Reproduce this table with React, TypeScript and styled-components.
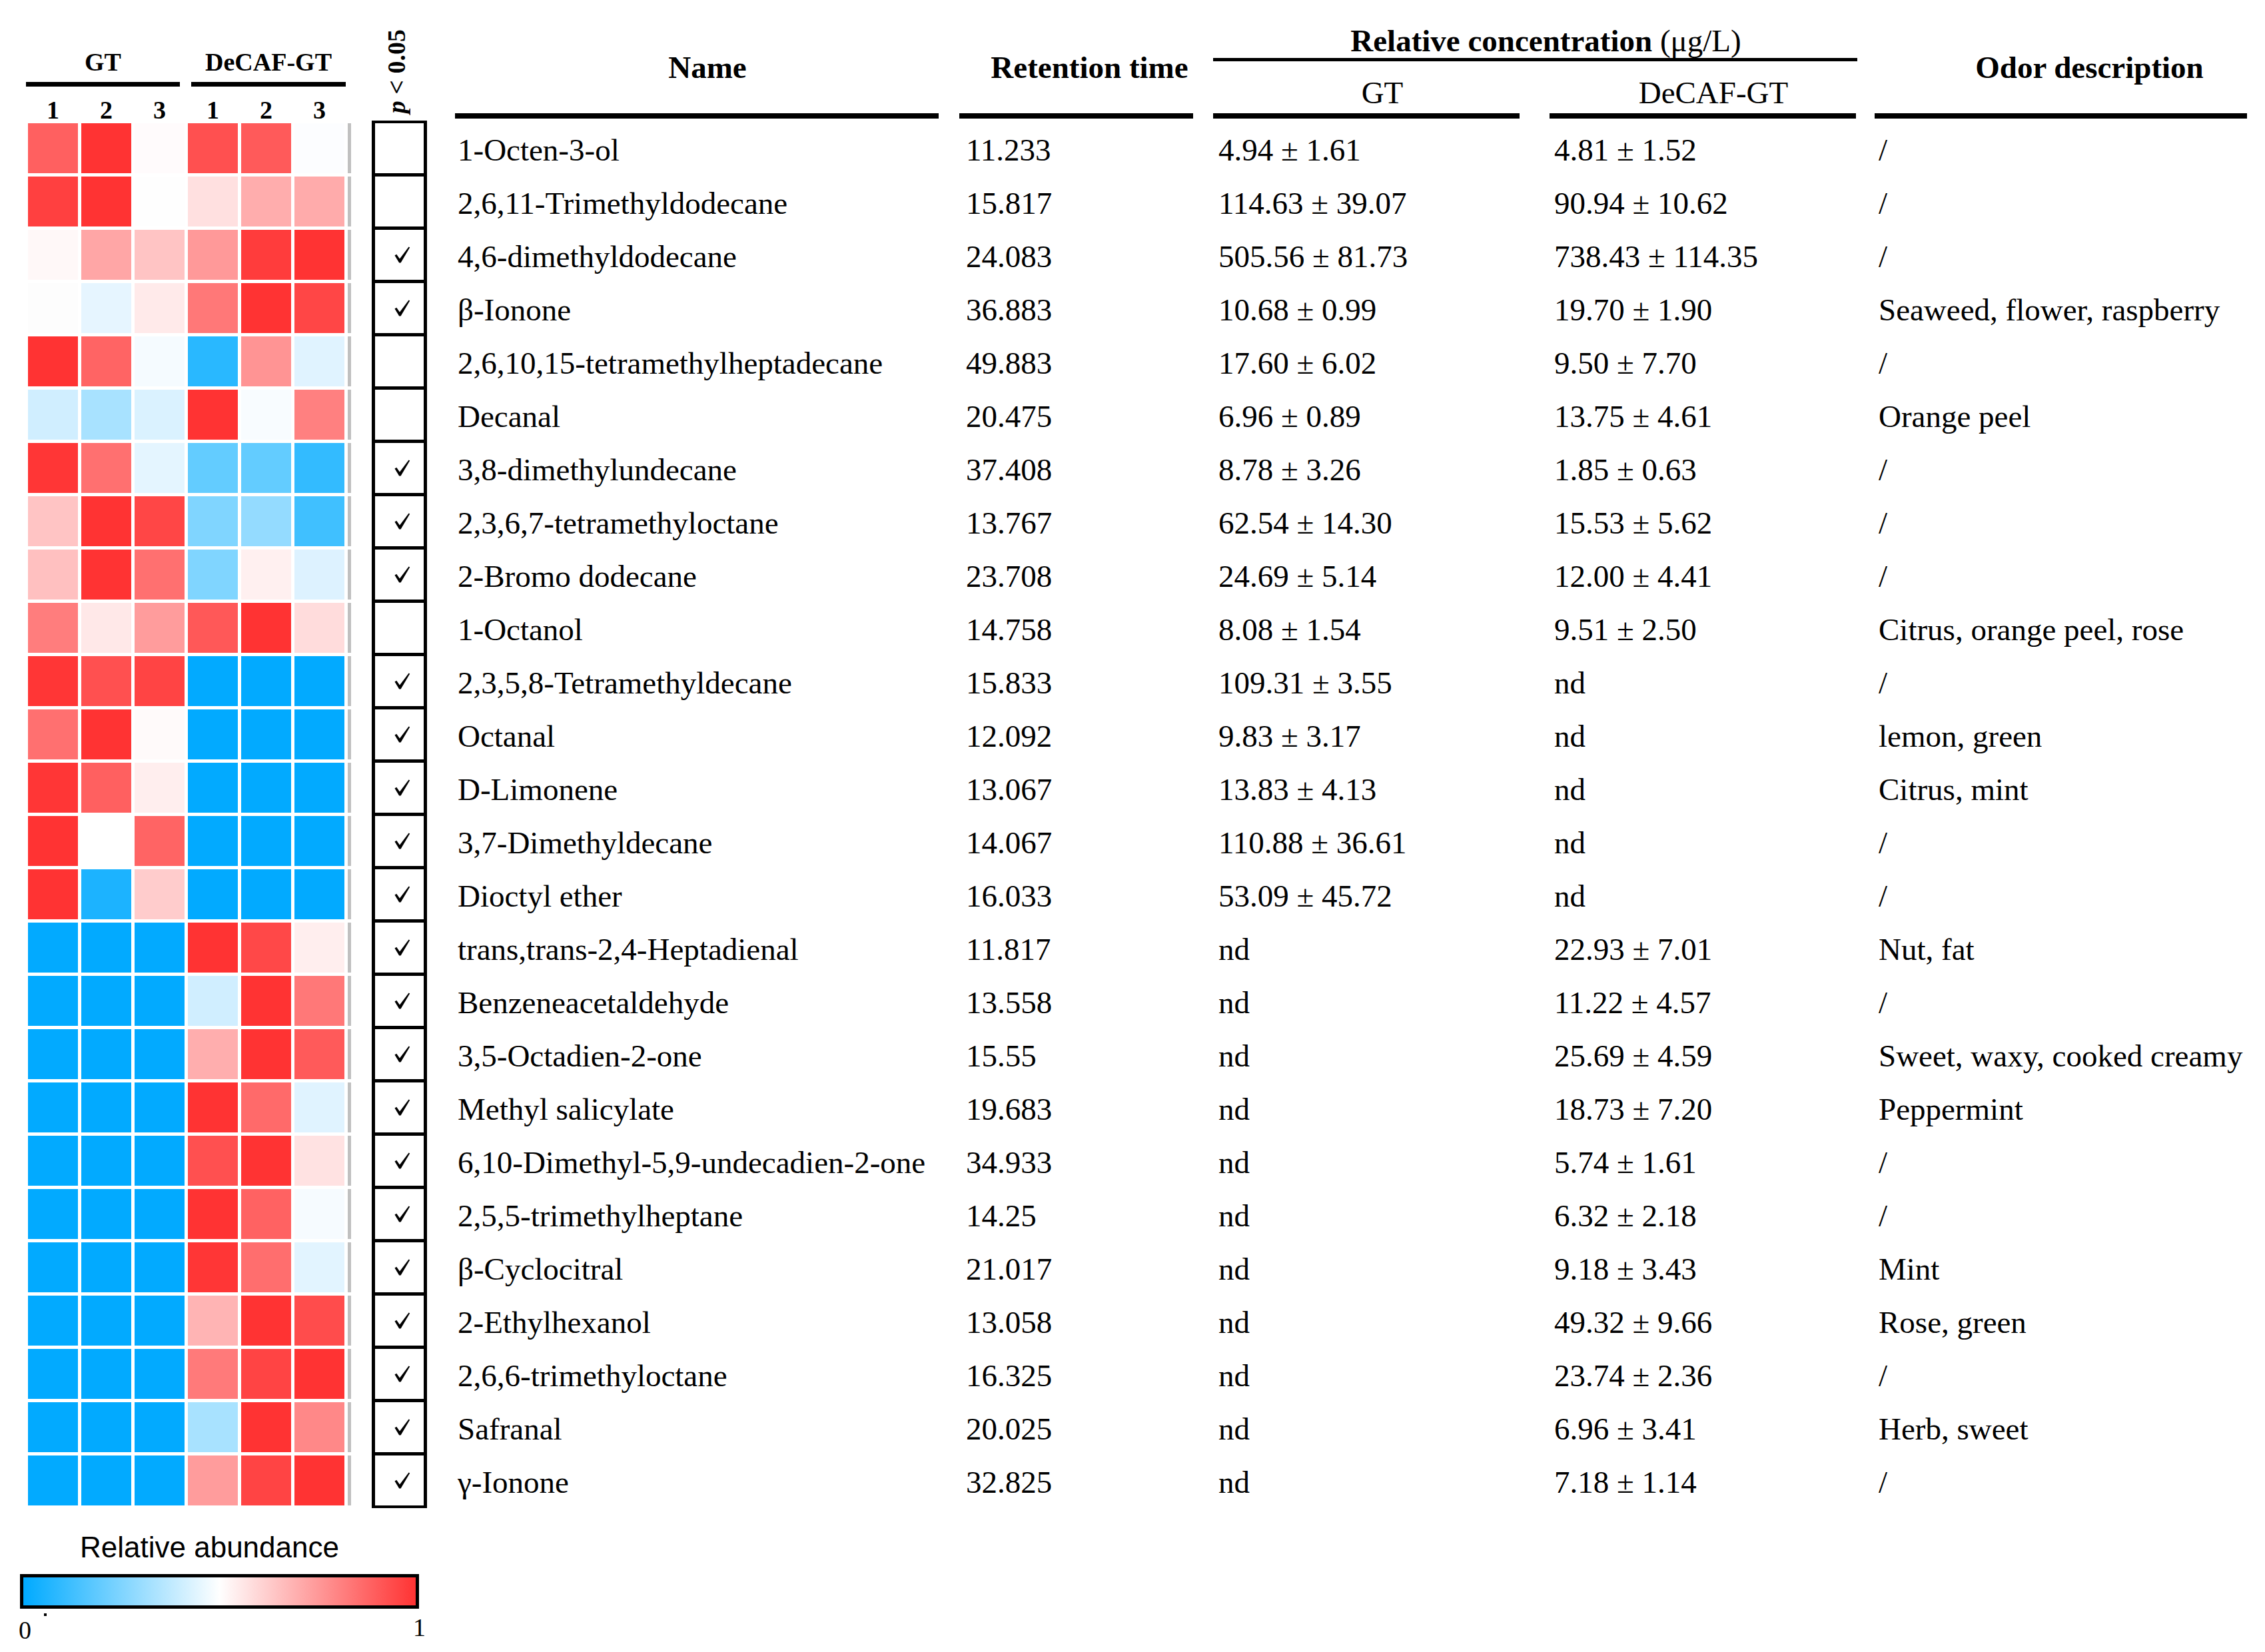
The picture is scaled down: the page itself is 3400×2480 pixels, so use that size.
import React from 'react';
import styled, { createGlobalStyle } from 'styled-components';

const GlobalStyle = createGlobalStyle`
  body {
    margin: 0;
    background: #fff;
    color: #000;
  }
`;

const SERIF = `'Liberation Serif', 'Times New Roman', serif`;
const B = '#02aaff';

type Row = {
  heat: string[];
  sig: boolean;
  name: string;
  rt: string;
  gt: string;
  decaf: string;
  odor: string;
};

const rows: Row[] = [
  { heat: ['#ff6060', '#ff3333', '#fffbfc', '#ff5050', '#ff5a5a', '#fcfdff'], sig: false, name: '1-Octen-3-ol', rt: '11.233', gt: '4.94 ± 1.61', decaf: '4.81 ± 1.52', odor: '/' },
  { heat: ['#ff4040', '#ff3333', '#fefefe', '#ffe0e0', '#ffadad', '#ffabab'], sig: false, name: '2,6,11-Trimethyldodecane', rt: '15.817', gt: '114.63 ± 39.07', decaf: '90.94 ± 10.62', odor: '/' },
  { heat: ['#fff8f8', '#ffa6a6', '#ffc4c4', '#ff9999', '#ff3c3c', '#ff3333'], sig: true, name: '4,6-dimethyldodecane', rt: '24.083', gt: '505.56 ± 81.73', decaf: '738.43 ± 114.35', odor: '/' },
  { heat: ['#fdfdfd', '#e6f5ff', '#ffeaea', '#ff7878', '#ff3333', '#ff4646'], sig: true, name: 'β-Ionone', rt: '36.883', gt: '10.68 ± 0.99', decaf: '19.70 ± 1.90', odor: 'Seaweed, flower, raspberry' },
  { heat: ['#ff3333', '#ff6464', '#f5fbff', '#29b8ff', '#ff9494', '#e0f3ff'], sig: false, name: '2,6,10,15-tetramethylheptadecane', rt: '49.883', gt: '17.60 ± 6.02', decaf: '9.50 ± 7.70', odor: '/' },
  { heat: ['#d0eeff', '#a8e2ff', '#daf2ff', '#ff3333', '#f8fcff', '#ff8080'], sig: false, name: 'Decanal', rt: '20.475', gt: '6.96 ± 0.89', decaf: '13.75 ± 4.61', odor: 'Orange peel' },
  { heat: ['#ff3636', '#ff7070', '#e4f5ff', '#63ccff', '#63ccff', '#33bbff'], sig: true, name: '3,8-dimethylundecane', rt: '37.408', gt: '8.78 ± 3.26', decaf: '1.85 ± 0.63', odor: '/' },
  { heat: ['#ffc4c4', '#ff3333', '#ff4646', '#80d5ff', '#94dbff', '#40c0ff'], sig: true, name: '2,3,6,7-tetramethyloctane', rt: '13.767', gt: '62.54 ± 14.30', decaf: '15.53 ± 5.62', odor: '/' },
  { heat: ['#ffc0c0', '#ff3333', '#ff7070', '#80d5ff', '#fff0f0', '#ddf2ff'], sig: true, name: '2-Bromo dodecane', rt: '23.708', gt: '24.69 ± 5.14', decaf: '12.00 ± 4.41', odor: '/' },
  { heat: ['#ff7d7d', '#ffe8e8', '#ff9c9c', '#ff5858', '#ff3333', '#ffdcdc'], sig: false, name: '1-Octanol', rt: '14.758', gt: '8.08 ± 1.54', decaf: '9.51 ± 2.50', odor: 'Citrus, orange peel, rose' },
  { heat: ['#ff3636', '#ff5050', '#ff4444', B, B, B], sig: true, name: '2,3,5,8-Tetramethyldecane', rt: '15.833', gt: '109.31 ± 3.55', decaf: 'nd', odor: '/' },
  { heat: ['#ff7070', '#ff3333', '#fffafa', B, B, B], sig: true, name: 'Octanal', rt: '12.092', gt: '9.83 ± 3.17', decaf: 'nd', odor: 'lemon, green' },
  { heat: ['#ff3636', '#ff6060', '#ffeeee', B, B, B], sig: true, name: 'D-Limonene', rt: '13.067', gt: '13.83 ± 4.13', decaf: 'nd', odor: 'Citrus, mint' },
  { heat: ['#ff3333', '#ffffff', '#ff6464', B, B, B], sig: true, name: '3,7-Dimethyldecane', rt: '14.067', gt: '110.88 ± 36.61', decaf: 'nd', odor: '/' },
  { heat: ['#ff3333', '#1cb3ff', '#ffcccc', B, B, B], sig: true, name: 'Dioctyl ether', rt: '16.033', gt: '53.09 ± 45.72', decaf: 'nd', odor: '/' },
  { heat: [B, B, B, '#ff3333', '#ff4848', '#ffeeee'], sig: true, name: 'trans,trans-2,4-Heptadienal', rt: '11.817', gt: 'nd', decaf: '22.93 ± 7.01', odor: 'Nut, fat' },
  { heat: [B, B, B, '#d0eeff', '#ff3333', '#ff7878'], sig: true, name: 'Benzeneacetaldehyde', rt: '13.558', gt: 'nd', decaf: '11.22 ± 4.57', odor: '/' },
  { heat: [B, B, B, '#ffaeae', '#ff3333', '#ff5a5a'], sig: true, name: '3,5-Octadien-2-one', rt: '15.55', gt: 'nd', decaf: '25.69 ± 4.59', odor: 'Sweet, waxy, cooked creamy' },
  { heat: [B, B, B, '#ff3333', '#ff6a6a', '#e0f3ff'], sig: true, name: 'Methyl salicylate', rt: '19.683', gt: 'nd', decaf: '18.73 ± 7.20', odor: 'Peppermint' },
  { heat: [B, B, B, '#ff5050', '#ff3333', '#ffe2e2'], sig: true, name: '6,10-Dimethyl-5,9-undecadien-2-one', rt: '34.933', gt: 'nd', decaf: '5.74 ± 1.61', odor: '/' },
  { heat: [B, B, B, '#ff3333', '#ff6262', '#f6fbff'], sig: true, name: '2,5,5-trimethylheptane', rt: '14.25', gt: 'nd', decaf: '6.32 ± 2.18', odor: '/' },
  { heat: [B, B, B, '#ff3636', '#ff6e6e', '#e2f4ff'], sig: true, name: 'β-Cyclocitral', rt: '21.017', gt: 'nd', decaf: '9.18 ± 3.43', odor: 'Mint' },
  { heat: [B, B, B, '#ffb4b4', '#ff3333', '#ff4c4c'], sig: true, name: '2-Ethylhexanol', rt: '13.058', gt: 'nd', decaf: '49.32 ± 9.66', odor: 'Rose, green' },
  { heat: [B, B, B, '#ff7a7a', '#ff4444', '#ff3333'], sig: true, name: '2,6,6-trimethyloctane', rt: '16.325', gt: 'nd', decaf: '23.74 ± 2.36', odor: '/' },
  { heat: [B, B, B, '#a8e2ff', '#ff3333', '#ff8888'], sig: true, name: 'Safranal', rt: '20.025', gt: 'nd', decaf: '6.96 ± 3.41', odor: 'Herb, sweet' },
  { heat: [B, B, B, '#ff9c9c', '#ff4444', '#ff3333'], sig: true, name: 'γ-Ionone', rt: '32.825', gt: 'nd', decaf: '7.18 ± 1.14', odor: '/' },
];

const Figure = styled.div`
  width: 3400px;
  height: 2480px;
  display: flex;
  flex-direction: column;
  font-family: ${SERIF};
  overflow: hidden;
`;

const Top = styled.div`
  display: flex;
  align-items: flex-start;
  padding-left: 42px;
`;

/* heatmap */

const HeatBlock = styled.div`
  width: 485px;
  display: flex;
  flex-direction: column;
`;

const HeatHeader = styled.div`
  height: 185px;
  box-sizing: border-box;
  padding-top: 74px;
  display: flex;
  flex-direction: column;
`;

const GroupRow = styled.div`
  display: grid;
  grid-template-columns: 240px 240px;
`;

const Group = styled.div<{ $offset: number; $width: number }>`
  width: ${(p) => p.$width}px;
  margin-left: ${(p) => p.$offset}px;
  display: flex;
  flex-direction: column;
`;

const GroupLabel = styled.div`
  font-weight: bold;
  font-size: 38px;
  line-height: 38px;
  text-align: center;
  white-space: nowrap;
`;

const GroupRule = styled.div`
  height: 7px;
  margin-top: 11px;
  background: #000;
`;

const NumRow = styled.div`
  display: grid;
  grid-template-columns: repeat(6, 75px);
  column-gap: 5px;
  margin-top: 16px;
`;

const Num = styled.div`
  font-weight: bold;
  font-size: 38px;
  line-height: 38px;
  text-align: center;
`;

const HeatGrid = styled.div`
  display: grid;
  row-gap: 5px;
`;

const HeatRow = styled.div`
  display: flex;
  gap: 5px;
  height: 75px;
`;

const Cell = styled.div<{ $c: string }>`
  width: 75px;
  height: 75px;
  background: ${(p) => p.$c};
`;

const Tail = styled.div`
  width: 5px;
  height: 75px;
  background: #c0c0c0;
`;

/* p < 0.05 column */

const PCol = styled.div`
  width: 83px;
  margin-left: 31px;
  display: flex;
  flex-direction: column;
`;

const PHeader = styled.div`
  height: 181px;
  box-sizing: border-box;
  padding-bottom: 11px;
  padding-right: 10px;
  display: flex;
  justify-content: center;
  align-items: flex-end;
`;

const PLabel = styled.div`
  writing-mode: vertical-rl;
  transform: rotate(180deg);
  font-weight: bold;
  font-size: 38px;
  line-height: 38px;
  white-space: nowrap;

  i {
    font-style: italic;
  }
`;

const PBoxes = styled.div`
  border: 5px solid #000;
  border-top-width: 4px;
  border-bottom-width: 4px;
  display: flex;
  flex-direction: column;
`;

const PBox = styled.div`
  height: 75px;
  display: flex;
  align-items: center;
  justify-content: center;
  padding-left: 8px;

  & + & {
    border-top: 5px solid #000;
  }
`;

const Check = () => (
  <svg width="24" height="25" viewBox="0 0 24 25">
    <path d="M0.5 13.5 L3.2 11.8 L8 18.6 L21.6 0.6 L23.2 1.6 L9.6 24.4 L7.2 24.4 Z" fill="#000" />
  </svg>
);

/* table */

const COLS = '757px 381px 505px 488px 566px';

const Table = styled.div`
  margin-left: 42px;
  width: 2697px;
  display: flex;
  flex-direction: column;
`;

const Head = styled.div`
  display: grid;
  grid-template-columns: ${COLS};
  height: 185px;
`;

const HeadCell = styled.div`
  display: flex;
  flex-direction: column;
  justify-content: flex-end;
  padding-bottom: 7px;
`;

const HeadLabel = styled.div<{ $w: number; $shift: number; $gap: number; $bold?: boolean }>`
  width: ${(p) => p.$w}px;
  box-sizing: border-box;
  padding-left: ${(p) => p.$shift * 2}px;
  margin-bottom: ${(p) => p.$gap}px;
  font-size: 47px;
  line-height: 47px;
  font-weight: ${(p) => (p.$bold ? 'bold' : 'normal')};
  text-align: center;
  white-space: nowrap;

  span {
    font-weight: normal;
  }
`;

const Rule = styled.div<{ $w: number; $h?: number }>`
  width: ${(p) => p.$w}px;
  height: ${(p) => p.$h ?? 8}px;
  background: #000;
`;

const HeadGroup = styled.div`
  grid-column: 3 / 5;
  display: flex;
  flex-direction: column;
  padding-top: 38px;
`;

const SubHead = styled.div`
  display: grid;
  grid-template-columns: 505px 488px;
  margin-top: 24px;
`;

const Body = styled.div`
  display: flex;
  flex-direction: column;
`;

const BodyRow = styled.div`
  display: grid;
  grid-template-columns: ${COLS};
  height: 80px;
`;

const Td = styled.div<{ $pad: number }>`
  padding-left: ${(p) => p.$pad}px;
  font-size: 47px;
  line-height: 80px;
  white-space: nowrap;
`;

/* legend */

const Legend = styled.div`
  margin-top: 36px;
  padding-left: 30px;
  width: 599px;
  display: flex;
  flex-direction: column;
`;

const LegendTitle = styled.div`
  font-family: 'Liberation Sans', Arial, sans-serif;
  font-size: 44px;
  line-height: 44px;
  text-align: center;
  padding-right: 30px;
`;

const ColorBar = styled.div`
  margin-top: 18px;
  height: 52px;
  box-sizing: border-box;
  border: 5px solid #000;
  background: linear-gradient(to right, #00aaff 0%, #ffffff 50%, #ff3333 100%);
`;

const Ticks = styled.div`
  position: relative;
  margin-top: 13px;
  margin-left: -2px;
  width: 611px;
  display: flex;
  justify-content: space-between;
  align-items: flex-start;
  font-size: 38px;
  line-height: 38px;

  &::before {
    content: '';
    position: absolute;
    left: 38px;
    top: -6px;
    width: 4px;
    height: 4px;
    background: #000;
  }
`;

const Tick = styled.span<{ $raise?: number }>`
  margin-top: ${(p) => -(p.$raise ?? 0)}px;
`;

const App: React.FC = () => {
  return (
    <Figure>
      <GlobalStyle />
      <Top>
        <HeatBlock>
          <HeatHeader>
            <GroupRow>
              <Group $offset={-3} $width={231}>
                <GroupLabel>GT</GroupLabel>
                <GroupRule />
              </Group>
              <Group $offset={5} $width={232}>
                <GroupLabel>DeCAF-GT</GroupLabel>
                <GroupRule />
              </Group>
            </GroupRow>
            <NumRow>
              {['1', '2', '3', '1', '2', '3'].map((n, i) => (
                <Num key={i}>{n}</Num>
              ))}
            </NumRow>
          </HeatHeader>
          <HeatGrid>
            {rows.map((r, i) => (
              <HeatRow key={i}>
                {r.heat.map((c, j) => (
                  <Cell key={j} $c={c} />
                ))}
                <Tail />
              </HeatRow>
            ))}
          </HeatGrid>
        </HeatBlock>

        <PCol>
          <PHeader>
            <PLabel>
              <i>p</i> &lt; 0.05
            </PLabel>
          </PHeader>
          <PBoxes>
            {rows.map((r, i) => (
              <PBox key={i}>{r.sig && <Check />}</PBox>
            ))}
          </PBoxes>
        </PCol>

        <Table>
          <Head>
            <HeadCell>
              <HeadLabel $w={726} $shift={16} $gap={45} $bold>
                Name
              </HeadLabel>
              <Rule $w={726} />
            </HeadCell>
            <HeadCell>
              <HeadLabel $w={351} $shift={20} $gap={45} $bold>
                Retention time
              </HeadLabel>
              <Rule $w={351} />
            </HeadCell>
            <HeadGroup>
              <HeadLabel $w={967} $shift={16} $gap={2} $bold>
                Relative concentration <span>(μg/L)</span>
              </HeadLabel>
              <Rule $w={967} $h={5} />
              <SubHead>
                <HeadCell>
                  <HeadLabel $w={460} $shift={24} $gap={7}>
                    GT
                  </HeadLabel>
                  <Rule $w={460} />
                </HeadCell>
                <HeadCell>
                  <HeadLabel $w={460} $shift={16} $gap={7}>
                    DeCAF-GT
                  </HeadLabel>
                  <Rule $w={460} />
                </HeadCell>
              </SubHead>
            </HeadGroup>
            <HeadCell>
              <HeadLabel $w={559} $shift={43} $gap={45} $bold>
                Odor description
              </HeadLabel>
              <Rule $w={559} />
            </HeadCell>
          </Head>
          <Body>
            {rows.map((r, i) => (
              <BodyRow key={i}>
                <Td $pad={4}>{r.name}</Td>
                <Td $pad={10}>{r.rt}</Td>
                <Td $pad={8}>{r.gt}</Td>
                <Td $pad={7}>{r.decaf}</Td>
                <Td $pad={6}>{r.odor}</Td>
              </BodyRow>
            ))}
          </Body>
        </Table>
      </Top>

      <Legend>
        <LegendTitle>Relative abundance</LegendTitle>
        <ColorBar />
        <Ticks>
          <Tick>0</Tick>
          <Tick $raise={4}>1</Tick>
        </Ticks>
      </Legend>
    </Figure>
  );
};

export default App;
